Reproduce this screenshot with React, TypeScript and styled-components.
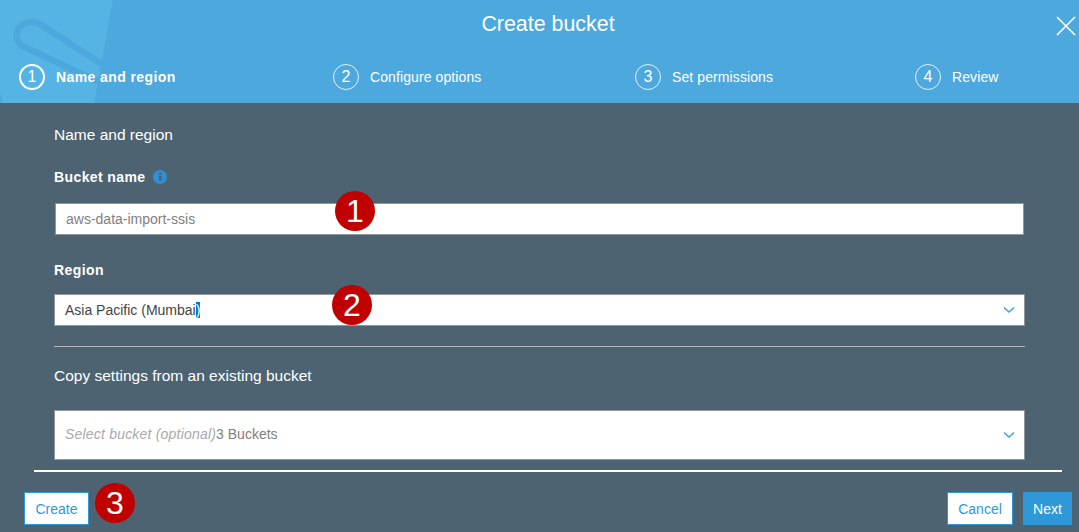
import React from 'react';
import styled, { createGlobalStyle } from 'styled-components';

const GlobalStyle = createGlobalStyle`
	html, body {
		margin: 0;
		padding: 0;
		background: #4e6371;
		font-family: 'Liberation Sans', Arial, sans-serif;
	}
`;

const Page = styled.div`
	position: relative;
	width: 1079px;
	height: 532px;
	overflow: hidden;
	background: #4e6371;
`;

const Header = styled.header`
	position: relative;
	height: 103px;
	background: #4da8dd;
	overflow: hidden;
`;

const BucketArt = styled.svg`
	position: absolute;
	left: 0;
	top: 0;
`;

const Title = styled.h1`
	position: relative;
	margin: 0;
	padding-top: 12px;
	height: 37px;
	box-sizing: border-box;
	padding-right: 62px;
	padding-left: 79px;
	text-align: center;
	color: white;
	font-size: 21.4px;
	line-height: 25px;
	font-weight: 400;
`;

const CloseIcon = styled.svg`
	position: absolute;
	right: 2px;
	top: 15px;
`;

const Steps = styled.div`
	position: relative;
	display: flex;
	margin-top: 27px;
	padding-left: 19px;
`;

const Step = styled.div<{ $width: number; $active?: boolean }>`
	display: flex;
	align-items: center;
	gap: 11px;
	width: ${(p) => p.$width}px;
	height: 26px;
	color: white;
	font-size: 14px;
	letter-spacing: ${(p) => (p.$active ? 0.4 : 0.1)}px;
	font-weight: ${(p) => (p.$active ? 700 : 400)};
`;

const StepNumber = styled.span<{ $active?: boolean }>`
	display: flex;
	align-items: center;
	justify-content: center;
	box-sizing: border-box;
	width: 26px;
	height: 26px;
	border-radius: 50%;
	border: ${(p) => (p.$active ? '2px solid #fff' : '1px solid #e3f1fa')};
	font-size: 16px;
	font-weight: 400;
	letter-spacing: 0;
`;

const Body = styled.main`
	padding: 0 54px;
	width: 971px;
	box-sizing: content-box;
`;

const SectionTitle = styled.div<{ $top: number }>`
	margin-top: ${(p) => p.$top}px;
	height: 18px;
	line-height: 18px;
	color: white;
	font-size: 15.5px;
`;

const Label = styled.div<{ $top: number }>`
	display: flex;
	align-items: center;
	gap: 7px;
	margin-top: ${(p) => p.$top}px;
	height: 16px;
	color: white;
	font-size: 14px;
	font-weight: 700;
	letter-spacing: 0.4px;
`;

const Info = styled.svg`
	display: block;
`;

const Field = styled.div<{ $height: number; $top: number; $inset?: boolean; $muted?: boolean }>`
	display: flex;
	align-items: center;
	justify-content: space-between;
	box-sizing: border-box;
	height: ${(p) => p.$height}px;
	margin-top: ${(p) => p.$top}px;
	margin-left: ${(p) => (p.$inset ? 1 : 0)}px;
	margin-right: ${(p) => (p.$inset ? 1 : 0)}px;
	padding: 0 9px 0 10px;
	background: white;
	border: 1px solid #8e979d;
	color: ${(p) => (p.$muted ? '#808080' : '#444')};
	font-size: 14px;
`;

const Selected = styled.span`
	background: #0078d7;
	color: white;
`;

const BucketPicker = styled.span`
	margin-bottom: 2px;
`;

const Placeholder = styled.em`
	color: #aaa;
	font-style: italic;
	letter-spacing: 0.2px;
`;

const Chevron = styled.svg`
	flex: none;
`;

const ThinRule = styled.hr`
	height: 1px;
	margin: 20px 0 0;
	border: 0;
	background: #b5b9bb;
`;

const FooterRule = styled.hr`
	height: 2px;
	margin: 10px 17px 0 34px;
	border: 0;
	background: white;
`;

const Footer = styled.footer`
	display: flex;
	justify-content: space-between;
	margin-top: 20px;
	padding: 0 7px 0 24px;
`;

const ButtonGroup = styled.div`
	display: flex;
	gap: 10px;
`;

const Button = styled.button<{ $primary?: boolean; $width: number }>`
	box-sizing: border-box;
	width: ${(p) => p.$width}px;
	height: 33px;
	padding: 0;
	border: 1px solid #2f98d8;
	background: ${(p) => (p.$primary ? '#2f98d8' : 'white')};
	color: ${(p) => (p.$primary ? 'white' : '#2f98d8')};
	font-family: inherit;
	font-size: 14px;
`;

const Callout = styled.div<{ $x: number; $y: number }>`
	position: absolute;
	left: ${(p) => p.$x - 20}px;
	top: ${(p) => p.$y - 20}px;
	display: flex;
	align-items: center;
	justify-content: center;
	width: 40px;
	height: 40px;
	border-radius: 50%;
	background: #c00000;
	color: white;
	font-size: 32px;
`;

const steps = [
	{ n: 1, label: 'Name and region', width: 314, active: true },
	{ n: 2, label: 'Configure options', width: 302 },
	{ n: 3, label: 'Set permissions', width: 280 },
	{ n: 4, label: 'Review', width: 120 }
];

const ChevronDown = () => (
	<Chevron width="12" height="8" viewBox="0 0 12 8">
		<path d="M1 1.5 L6 6 L11 1.5" fill="none" stroke="#3fa3e0" strokeWidth="1.6" />
	</Chevron>
);

export default function App() {
	return (
		<Page>
			<GlobalStyle />
			<Header>
				<BucketArt width="130" height="103" viewBox="0 0 130 103">
					<path d="M0 0 H113 L94 103 H3 L0 92 Z" fill="#55b4e3" />
					<path
						d="M117 52 C124 58 125 68 121 75 C117 82 106 84 95 80 L22 46 C15 41 15 30 22 25 C28 21 35 21 40 24 L103 65"
						fill="none"
						stroke="#4da8dd"
						strokeWidth="6.5"
						strokeLinecap="round"
					/>
				</BucketArt>
				<Title>Create bucket</Title>
				<CloseIcon width="22" height="22" viewBox="0 0 22 22">
					<path d="M2 2 L20 20 M20 2 L2 20" stroke="white" strokeWidth="1.6" />
				</CloseIcon>
				<Steps>
					{steps.map((s) => (
						<Step key={s.n} $width={s.width} $active={s.active}>
							<StepNumber $active={s.active}>{s.n}</StepNumber>
							{s.label}
						</Step>
					))}
				</Steps>
			</Header>
			<Body>
				<SectionTitle $top={23}>Name and region</SectionTitle>
				<Label $top={25}>
					Bucket name
					<Info width="14" height="14" viewBox="0 0 14 14">
						<circle cx="7" cy="7" r="7" fill="#2f8fd0" />
						<rect x="6" y="6" width="2.4" height="5" fill="#4e6371" />
						<rect x="6" y="3" width="2.4" height="2" fill="#4e6371" />
					</Info>
				</Label>
				<Field $height={32} $top={18} $inset $muted>
					aws-data-import-ssis
				</Field>
				<Label $top={27}>Region</Label>
				<Field $height={32} $top={16}>
					<span>
						Asia Pacific (Mumbai<Selected>)</Selected>
					</span>
					<ChevronDown />
				</Field>
				<ThinRule />
				<SectionTitle $top={20}>Copy settings from an existing bucket</SectionTitle>
				<Field $height={50} $top={25} $muted>
					<BucketPicker>
						<Placeholder>Select bucket (optional)</Placeholder>3 Buckets
					</BucketPicker>
					<ChevronDown />
				</Field>
			</Body>
			<FooterRule />
			<Footer>
				<Button $width={65}>Create</Button>
				<ButtonGroup>
					<Button $width={66}>Cancel</Button>
					<Button $width={49} $primary>
						Next
					</Button>
				</ButtonGroup>
			</Footer>
			<Callout $x={355} $y={211}>1</Callout>
			<Callout $x={352} $y={305}>2</Callout>
			<Callout $x={115} $y={503}>3</Callout>
		</Page>
	);
}
